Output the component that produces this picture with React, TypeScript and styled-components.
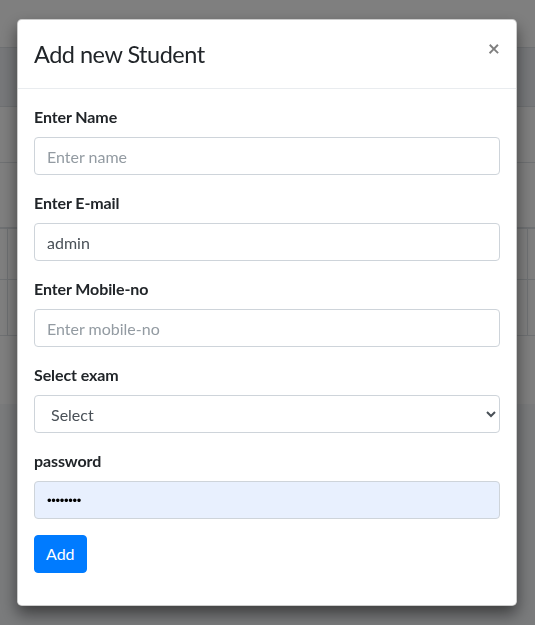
import React from "react";
import styled, { createGlobalStyle } from "styled-components";

const Global = createGlobalStyle`
  * { box-sizing: border-box; }
  html, body { margin: 0; padding: 0; }
  body {
    font-family: "Source Sans Pro", Lato, "Noto Sans", sans-serif;
    font-size: 16px;
    line-height: 1.5;
    color: #212529;
    background: #f4f6f9;
    overflow: hidden;
  }
`;

const Page = styled.div`
  height: 625px;
  display: flex;
  flex-direction: column;
  background: #f4f6f9;
`;

const Stripe = styled.div<{ $h: number; $bg?: string; $border?: number }>`
  height: ${(p) => p.$h}px;
  flex: none;
  background: ${(p) => p.$bg || "#ffffff"};
  border-bottom: ${(p) => (p.$border === 0 ? "none" : `${p.$border || 1}px solid #dee2e6`)};
`;

const TableRow = styled.div<{ $h: number; $border?: number }>`
  height: ${(p) => p.$h}px;
  flex: none;
  background: #fff;
  display: grid;
  grid-template-columns: 8px 1fr 8px;
  border-bottom: ${(p) => p.$border || 1}px solid #dee2e6;
`;

const Cell = styled.div<{ $edge?: "l" | "r" }>`
  border-right: ${(p) => (p.$edge === "l" ? "1px solid #dee2e6" : "none")};
  border-left: ${(p) => (p.$edge === "r" ? "1px solid #dee2e6" : "none")};
`;

const Backdrop = styled.div`
  position: fixed;
  inset: 0;
  background: rgba(0, 0, 0, 0.5);
`;

const ModalWrap = styled.div`
  position: fixed;
  inset: 0;
  padding: 19px 0 0 17px;
`;

const Dialog = styled.div`
  width: 500px;
  background: #fff;
  border: 1px solid rgba(0, 0, 0, 0.2);
  border-radius: 4.8px;
  box-shadow: 0 0.5rem 1rem rgba(0, 0, 0, 0.5);
  display: flex;
  flex-direction: column;
`;

const Header = styled.div`
  display: flex;
  align-items: flex-start;
  justify-content: space-between;
  padding: 16px;
  border-bottom: 1px solid #e9ecef;
`;

const Title = styled.h4`
  margin: 0;
  font-size: 23.5px;
  letter-spacing: -0.5px;
  font-weight: 400;
  line-height: 36px;
  color: #212529;
`;

const Close = styled.button`
  margin: -16px -16px -16px auto;
  padding: 17px 16px 16px 16px;
  background: transparent;
  border: 0;
  font-family: inherit;
  font-size: 21px;
  font-weight: 700;
  line-height: 1;
  color: #000;
  opacity: 0.5;
  text-shadow: 0 1px 0 #fff;
  cursor: pointer;
`;

const Body = styled.form`
  padding: 16px 16px 32px;
  display: flex;
  flex-direction: column;
`;

const Group = styled.div`
  margin-bottom: 16px;
  display: flex;
  flex-direction: column;
`;

const Label = styled.label`
  display: block;
  margin-bottom: 8px;
  font-weight: 700;
  font-size: 16px;
  line-height: 24px;
  letter-spacing: -0.1px;
  color: #212529;
`;

const Input = styled.input`
  display: block;
  width: 100%;
  height: 38px;
  padding: 6px 12px;
  font-family: inherit;
  font-size: 16px;
  line-height: 1.5;
  color: #495057;
  background: #fff;
  border: 1px solid #ced4da;
  border-radius: 4px;
  outline: none;
  &::placeholder { color: #939ba2; opacity: 1; }
`;

const PasswordInput = styled(Input)`
  font-family: "Liberation Sans", Arial, sans-serif;
  font-size: 13px;
  letter-spacing: -0.3px;
  color: #000;
  background: #e8f0fe;
`;

const Select = styled.select`
  display: block;
  width: 100%;
  height: 38px;
  padding: 6px 12px;
  font-family: inherit;
  font-size: 16px;
  line-height: 1.5;
  color: #495057;
  background: #fff;
  border: 1px solid #ced4da;
  border-radius: 4px;
  outline: none;
`;

const AddButton = styled.button`
  align-self: flex-start;
  height: 38px;
  padding: 6px 11px;
  font-family: inherit;
  font-size: 16px;
  line-height: 1.5;
  color: #fff;
  background: #007bff;
  border: 1px solid #007bff;
  border-radius: 4px;
  cursor: pointer;
`;

export default function App() {
  return (
    <>
      <Global />
      <Page>
        <Stripe $h={48} />
        <Stripe $h={59} $bg="#eef1f5" />
        <Stripe $h={56} />
        <Stripe $h={66} $border={2} />
        <TableRow $h={51}>
          <Cell $edge="l" />
          <Cell />
          <Cell $edge="r" />
        </TableRow>
        <TableRow $h={56}>
          <Cell $edge="l" />
          <Cell />
          <Cell $edge="r" />
        </TableRow>
        <Stripe $h={68} $border={0} />
      </Page>
      <Backdrop />
      <ModalWrap>
        <Dialog>
          <Header>
            <Title>Add new Student</Title>
            <Close type="button" aria-label="Close">×</Close>
          </Header>
          <Body onSubmit={(e) => e.preventDefault()}>
            <Group>
              <Label>Enter Name</Label>
              <Input type="text" placeholder="Enter name" />
            </Group>
            <Group>
              <Label>Enter E-mail</Label>
              <Input type="text" defaultValue="admin" />
            </Group>
            <Group>
              <Label>Enter Mobile-no</Label>
              <Input type="text" placeholder="Enter mobile-no" />
            </Group>
            <Group>
              <Label>Select exam</Label>
              <Select defaultValue="">
                <option value="">Select</option>
              </Select>
            </Group>
            <Group>
              <Label>password</Label>
              <PasswordInput type="password" defaultValue="12345678" />
            </Group>
            <AddButton type="submit">Add</AddButton>
          </Body>
        </Dialog>
      </ModalWrap>
    </>
  );
}
